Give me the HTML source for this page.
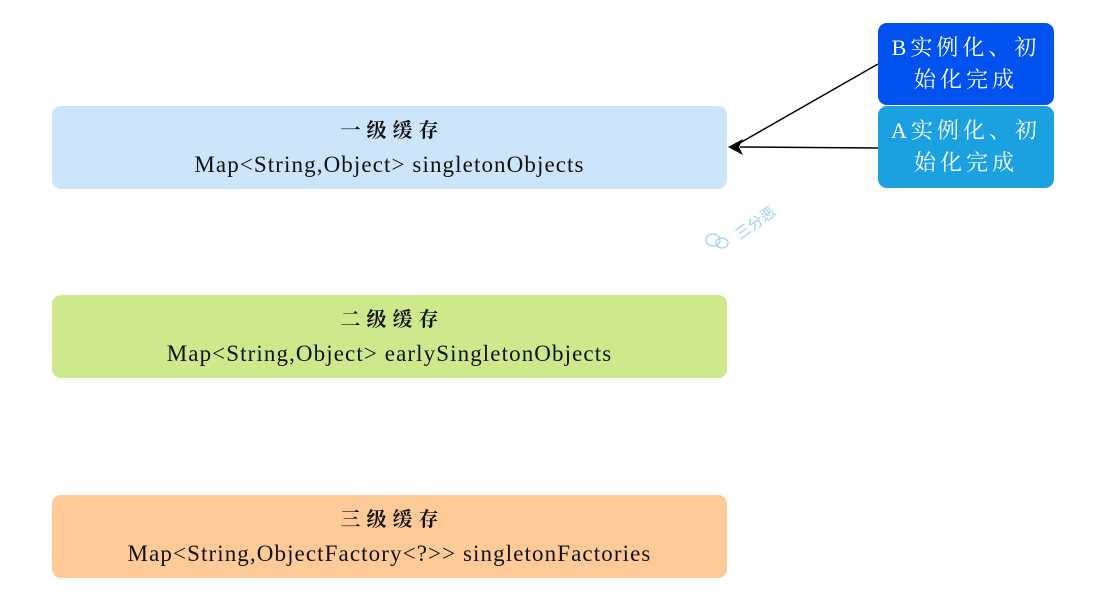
<!DOCTYPE html>
<html><head><meta charset="utf-8"><style>
body{margin:0;width:1097px;height:604px;background:#fff;position:relative;overflow:hidden;font-family:"Liberation Serif","Noto Serif CJK SC",serif;}
.b{position:absolute;left:52px;width:675px;height:83px;border-radius:9px;text-align:center;color:#111;}
.b .t{font-weight:bold;font-size:20px;margin-top:13px;line-height:24px;letter-spacing:6px;padding-left:6px;}
.b .s{font-size:23px;line-height:26px;margin-top:9px;letter-spacing:1.1px;}
.r{position:absolute;left:878px;width:176px;height:82px;border-radius:9px;color:#fff;font-size:22px;line-height:32px;text-align:center;padding-top:9px;box-sizing:border-box;letter-spacing:4px;}
</style></head><body>
<div class="b" style="top:106px;background:#cce5fb"><div class="t">一级缓存</div><div class="s">Map&lt;String,Object&gt; singletonObjects</div></div>
<div class="b" style="top:295px;background:#cde98b"><div class="t">二级缓存</div><div class="s">Map&lt;String,Object&gt; earlySingletonObjects</div></div>
<div class="b" style="top:495px;background:#fecb98"><div class="t">三级缓存</div><div class="s">Map&lt;String,ObjectFactory&lt;?&gt;&gt; singletonFactories</div></div>
<div class="r" style="top:23px;background:#0052ee">B实例化、初<br>始化完成</div>
<div class="r" style="top:106px;background:#1ba1e0">A实例化、初<br>始化完成</div>
<svg style="position:absolute;left:0;top:0" width="1097" height="604">
<line x1="878" y1="64" x2="738" y2="144" stroke="#000" stroke-width="1.5"/>
<line x1="878" y1="148" x2="740" y2="147" stroke="#000" stroke-width="1.5"/>
<polygon points="728,147 743,139 739,147 743,155" fill="#000"/>
<g fill="none" stroke="#9cd0f0" stroke-width="1.2"><ellipse cx="713" cy="240" rx="7" ry="6"/><ellipse cx="722" cy="243" rx="6" ry="5"/></g>
<text x="740" y="240" transform="rotate(-35 740 240)" font-size="15" fill="#9cd0f0" font-family="Noto Sans CJK SC,sans-serif">三分恶</text>
</svg>
</body></html>
